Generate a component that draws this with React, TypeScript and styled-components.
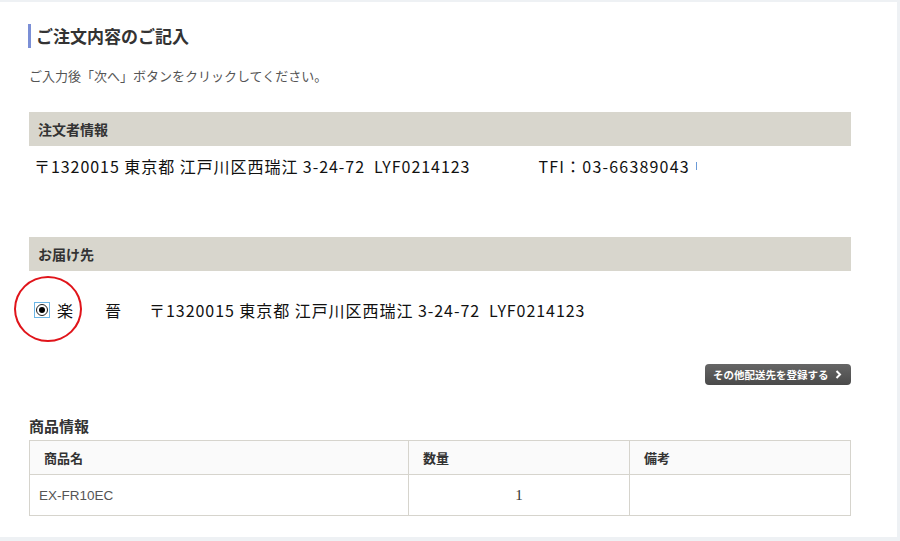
import styled, {createGlobalStyle} from "styled-components";

const GlobalStyle = createGlobalStyle`
	html, body {
		margin: 0;
		padding: 0;
		background: #eef1f4;
		font-family: "Noto Sans CJK JP", "Noto Sans", sans-serif;
	}
`;

const Page = styled.div`
	width: 897px;
	height: 535px;
	margin-top: 2px;
	background: #fff;
	overflow: hidden;
`;

const Content = styled.div`
	width: 822px;
	margin-left: 29px;
	display: flex;
	flex-direction: column;
`;

const Title = styled.h1`
	margin: 22px 0 0 -1px;
	padding-left: 5px;
	border-left: 3px solid #7b8fd6;
	height: 24px;
	line-height: 24px;
	font-size: 17px;
	font-weight: 700;
	color: #333;
`;

const Lead = styled.p`
	margin: 18px 0 0;
	line-height: 20px;
	font-size: 13px;
	color: #555;
`;

const SectionBar = styled.div<{$top: number}>`
	margin-top: ${p => p.$top}px;
	height: 34px;
	background: #d8d6cd;
	display: flex;
	align-items: center;
	padding-left: 9px;
	font-size: 14px;
	font-weight: 700;
	color: #333;
`;

const AddressLine = styled.div`
	margin-top: 8px;
	padding-left: 5px;
	height: 24px;
	display: flex;
	align-items: center;
	font-size: 16px;
	color: #111;
	white-space: pre;
`;

const Address = styled.span`
	letter-spacing: 0.95px;
`;

const Tel = styled.span`
	margin-left: 68px;
	letter-spacing: 1.2px;
`;

const Caret = styled.span`
	display: inline-block;
	width: 1px;
	height: 8px;
	margin-left: 6px;
	background: #6a9ad8;
`;

const RadioRow = styled.div`
	position: relative;
	margin-top: 27px;
	height: 24px;
	display: flex;
	align-items: center;
	font-size: 16px;
	color: #111;
	white-space: pre;
`;

const RadioBox = styled.span`
	margin-left: 5px;
	width: 14px;
	height: 14px;
	border: 1px solid #6cb6e6;
	background: #fff;
	display: flex;
	align-items: center;
	justify-content: center;
`;

const RadioDot = styled.span`
	width: 12px;
	height: 12px;
	border-radius: 50%;
	border: 1.5px solid #222;
	box-sizing: border-box;
	display: flex;
	align-items: center;
	justify-content: center;

	&::after {
		content: "";
		width: 6px;
		height: 6px;
		border-radius: 50%;
		background: #000;
	}
`;

const Name = styled.span<{$gap: number}>`
	margin-left: ${p => p.$gap}px;
`;

const Marker = styled.span`
	position: absolute;
	left: -15px;
	top: -22px;
	width: 64px;
	height: 62px;
	border: 2.5px solid #e0141a;
	border-radius: 50%;
	pointer-events: none;
`;

const ButtonRow = styled.div`
	margin-top: 42px;
	display: flex;
	justify-content: flex-end;
`;

const GreyButton = styled.button`
	height: 21px;
	width: 146px;
	padding: 0 0 0 8px;
	border: none;
	border-radius: 4px;
	background: linear-gradient(#666, #4a4a4a);
	color: #fff;
	font-family: inherit;
	font-size: 10.5px;
	font-weight: 700;
	display: flex;
	align-items: center;
	gap: 6px;
`;

const ItemsTitle = styled.h2`
	margin: 30px 0 0;
	line-height: 22px;
	font-size: 15px;
	font-weight: 700;
	color: #333;
`;

const Table = styled.table`
	margin-top: 3px;
	width: 822px;
	border-collapse: collapse;
	table-layout: fixed;
	font-size: 13px;
`;

const Th = styled.th<{$w?: number}>`
	width: ${p => (p.$w ? `${p.$w}px` : "auto")};
	height: 33px;
	padding: 0 0 0 14px;
	text-align: left;
	background: #fafafa;
	border: 1px solid #d6d4cd;
	font-weight: 700;
	color: #333;
`;

const Td = styled.td<{$center?: boolean}>`
	height: 40px;
	padding: 0 0 0 ${p => (p.$center ? 0 : 9)}px;
	text-align: ${p => (p.$center ? "center" : "left")};
	border: 1px solid #d6d4cd;
	font-family: ${p => (p.$center ? '"Liberation Serif", serif' : '"Liberation Sans", sans-serif')};
	font-size: ${p => (p.$center ? 15 : 13.5)}px;
	color: ${p => (p.$center ? "#333" : "#555")};
`;

const Chevron = () => (
	<svg width="7" height="9" viewBox="0 0 7 9">
		<path d="M1.5 1 L5 4.5 L1.5 8" fill="none" stroke="#fff" strokeWidth="2" />
	</svg>
);

const address = "〒1320015 東京都 江戸川区西瑞江 3-24-72  LYF0214123";

export default function App() {
	return (
		<>
			<GlobalStyle />
			<Page>
				<Content>
					<Title>ご注文内容のご記入</Title>
					<Lead>ご入力後「次へ」ボタンをクリックしてください。</Lead>

					<SectionBar $top={26}>注文者情報</SectionBar>
					<AddressLine>
						<Address>{address}</Address>
						<Tel>TFI：03-66389043</Tel>
						<Caret />
					</AddressLine>

					<SectionBar $top={59}>お届け先</SectionBar>
					<RadioRow>
						<RadioBox><RadioDot /></RadioBox>
						<Name $gap={7}>楽</Name>
						<Name $gap={32}>晉</Name>
						<Name $gap={28}><Address>{address}</Address></Name>
						<Marker />
					</RadioRow>

					<ButtonRow>
						<GreyButton>その他配送先を登録する <Chevron /></GreyButton>
					</ButtonRow>

					<ItemsTitle>商品情報</ItemsTitle>
					<Table>
						<thead>
							<tr>
								<Th $w={364}>商品名</Th>
								<Th $w={206}>数量</Th>
								<Th>備考</Th>
							</tr>
						</thead>
						<tbody>
							<tr>
								<Td>EX-FR10EC</Td>
								<Td $center>1</Td>
								<Td />
							</tr>
						</tbody>
					</Table>
				</Content>
			</Page>
		</>
	);
}
